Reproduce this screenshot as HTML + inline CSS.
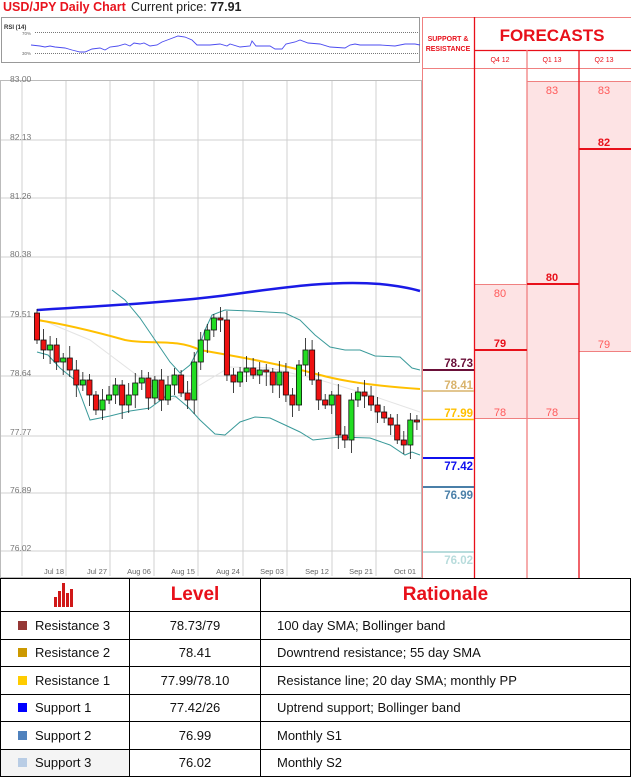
<!DOCTYPE html>
<html><head><meta charset="utf-8"><style>
body{margin:0;width:631px;height:777px;background:#fff;font-family:"Liberation Sans",sans-serif;overflow:hidden;position:relative}
.abs{position:absolute}
table{border-collapse:collapse;position:absolute;left:0;top:578px;width:631px}
td{border:1px solid #000;font-size:13px;color:#111;padding:0;height:26.5px}
</style></head><body>
<div class="abs" style="left:3px;top:0;font-size:12.5px;font-weight:bold;color:#e8141e">USD/JPY Daily Chart</div>
<div class="abs" style="left:131px;top:0;font-size:12.5px;color:#222">Current price: <b>77.91</b></div>

<svg class="abs" style="left:0;top:0" width="631" height="578">
<!-- RSI -->
<rect x="1.5" y="17.5" width="418" height="45" fill="#fff" stroke="#999"/>
<text x="4" y="29" font-size="6" font-weight="bold" fill="#333">RSI (14)</text>
<text x="22" y="35" font-size="4.5" fill="#666">70%</text>
<text x="22" y="55" font-size="4.5" fill="#666">30%</text>
<line x1="35" y1="32.5" x2="418" y2="32.5" stroke="#777" stroke-dasharray="1,1"/>
<line x1="35" y1="53.5" x2="418" y2="53.5" stroke="#777" stroke-dasharray="1,1"/>
<polyline fill="none" stroke="#4b4bf0" stroke-width="0.9" points="31,45 40,46 45,47 50,46 55,47 65,48 72,50 80,52 85,52 92,49 100,48 105,50 110,47 118,46 125,44 130,46 134,43 140,44 144,43 150,46 157,45 162,42 170,39 178,36 185,37 192,40 197,45 210,45 220,44 227,46 230,44 240,47 250,46 252,41 256,46 270,46 275,49 282,49 286,44 295,42 300,40 308,43 320,44 330,47 345,48 350,45 355,44 360,45 380,45"/>
<polyline fill="none" stroke="#4b4bf0" stroke-width="0.9" points="380,45 395,46 405,44 415,44 420,45"/>
<!-- chart frame -->
<rect x="0.5" y="80.5" width="421" height="497" fill="#fff" stroke="#bbb"/>
<g stroke="#d0d0d0" stroke-width="1">
<line x1="22" y1="81" x2="22" y2="576"/><line x1="66" y1="81" x2="66" y2="576"/><line x1="110" y1="81" x2="110" y2="576"/><line x1="154" y1="81" x2="154" y2="576"/><line x1="198" y1="81" x2="198" y2="576"/><line x1="243" y1="81" x2="243" y2="576"/><line x1="287" y1="81" x2="287" y2="576"/><line x1="332" y1="81" x2="332" y2="576"/><line x1="376" y1="81" x2="376" y2="576"/>
<line x1="1" y1="140" x2="421" y2="140"/><line x1="1" y1="198" x2="421" y2="198"/><line x1="1" y1="257" x2="421" y2="257"/><line x1="1" y1="317" x2="421" y2="317"/><line x1="1" y1="376" x2="421" y2="376"/><line x1="1" y1="436" x2="421" y2="436"/><line x1="1" y1="493" x2="421" y2="493"/><line x1="1" y1="551" x2="421" y2="551"/>
</g>
<g font-size="8.5" fill="#777">
<text x="10" y="82">83.00</text><text x="10" y="140">82.13</text><text x="10" y="199">81.26</text><text x="10" y="257">80.38</text><text x="10" y="317">79.51</text><text x="10" y="376">78.64</text><text x="10" y="435">77.77</text><text x="10" y="493">76.89</text><text x="10" y="551">76.02</text>
</g>
<g font-size="7.5" fill="#666" text-anchor="middle">
<text x="54" y="574">Jul 18</text><text x="97" y="574">Jul 27</text><text x="139" y="574">Aug 06</text><text x="183" y="574">Aug 15</text><text x="228" y="574">Aug 24</text><text x="272" y="574">Sep 03</text><text x="317" y="574">Sep 12</text><text x="361" y="574">Sep 21</text><text x="405" y="574">Oct 01</text>
</g>
<polyline fill="none" stroke="#e4e4e4" stroke-width="1" points="37,318 90,340 130,370 170,400 200,385 230,367 270,368 320,380 370,395 420,412"/>
<path d="M37,310 C120,305 170,302 220,296 C280,288 330,280 380,284 C400,286 410,288 420,291" fill="none" stroke="#1a1ae6" stroke-width="2.5"/>
<path d="M37,320 C70,325 100,333 125,340 C150,345 175,338 200,350 C240,357 280,364 320,375 C350,383 380,386 420,389" fill="none" stroke="#ffc000" stroke-width="2"/>
<polyline fill="none" stroke="#3a9a9a" stroke-width="1" points="37,352 48,355 60,368 75,380 90,420 110,416 130,411 150,408 165,397 175,396 188,407 200,420 215,434 225,435 240,422 255,417 270,418 285,425 300,432 313,440 340,437 370,438 390,445 405,455 412,452 420,455"/>
<polyline fill="none" stroke="#3a9a9a" stroke-width="1" points="112,290 125,300 140,318 155,340 170,362 180,373 190,365 198,350 205,330 212,315 225,310 250,311 285,313 300,320 315,335 330,347 345,350 360,350 375,356 400,357 412,368 420,370"/>
<g id="c" stroke="#111" stroke-width="0.8"></g>
<rect x="527" y="81" width="52" height="337" fill="#fde3e4"/>
<rect x="474" y="284" width="53" height="134" fill="#fde3e4"/>
<rect x="579" y="81" width="52" height="270" fill="#fde3e4"/>
<g stroke="#f08080" stroke-width="1" fill="none">
<line x1="422.5" y1="17" x2="422.5" y2="578"/>
<line x1="422" y1="17.5" x2="631" y2="17.5"/>
<line x1="422" y1="68.5" x2="631" y2="68.5"/>
<line x1="527" y1="81.5" x2="631" y2="81.5"/>
<line x1="474" y1="284.5" x2="527" y2="284.5"/>
<line x1="474" y1="418.5" x2="579" y2="418.5"/>
<line x1="579" y1="351.5" x2="631" y2="351.5"/>
</g>
<g stroke="#e8101a" stroke-width="1.3">
<line x1="474.5" y1="17" x2="474.5" y2="578"/>
<line x1="474" y1="50.5" x2="631" y2="50.5"/>
<line x1="527" y1="50" x2="527" y2="578" stroke="#f08080"/>
<line x1="579" y1="50" x2="579" y2="578"/>
</g>
<g stroke="#e8101a" stroke-width="2">
<line x1="474" y1="350" x2="527" y2="350"/>
<line x1="527" y1="284" x2="579" y2="284"/>
<line x1="579" y1="149" x2="631" y2="149"/>
</g>
<text x="448" y="41" font-size="7" font-weight="bold" fill="#e8101a" text-anchor="middle">SUPPORT &amp;</text>
<text x="448" y="51" font-size="7" font-weight="bold" fill="#e8101a" text-anchor="middle">RESISTANCE</text>
<text x="552" y="41" font-size="17" font-weight="bold" fill="#e8101a" text-anchor="middle">FORECASTS</text>
<g font-size="7" fill="#e8101a" text-anchor="middle">
<text x="500" y="62">Q4 12</text><text x="552" y="62">Q1 13</text><text x="604" y="62">Q2 13</text>
</g>
<g font-size="11" fill="#ff5a5a" text-anchor="middle">
<text x="552" y="94">83</text><text x="604" y="94">83</text>
<text x="500" y="297">80</text><text x="604" y="348">79</text>
<text x="500" y="416">78</text><text x="552" y="416">78</text>
</g>
<g font-size="11" font-weight="bold" fill="#e8101a" text-anchor="middle">
<text x="604" y="146">82</text><text x="552" y="281">80</text><text x="500" y="347">79</text>
</g>
<line x1="423" y1="370" x2="474" y2="370" stroke="#6a0f38" stroke-width="2"/>
<line x1="423" y1="391" x2="474" y2="391" stroke="#d9b36c" stroke-width="1.5"/>
<line x1="423" y1="419.5" x2="474" y2="419.5" stroke="#ffc000" stroke-width="1.5"/>
<line x1="423" y1="458" x2="474" y2="458" stroke="#1010ee" stroke-width="2"/>
<line x1="423" y1="487" x2="474" y2="487" stroke="#4a7fa8" stroke-width="2"/>
<line x1="423" y1="552" x2="474" y2="552" stroke="#b8dcdc" stroke-width="2"/>
<g font-size="11.5" font-weight="bold" text-anchor="end">
<text x="473" y="367" fill="#6a0f38">78.73</text>
<text x="473" y="389" fill="#d9b36c">78.41</text>
<text x="473" y="417" fill="#ffc000">77.99</text>
<text x="473" y="470" fill="#1010ee">77.42</text>
<text x="473" y="499" fill="#4a7fa8">76.99</text>
<text x="473" y="564" fill="#b8dcdc">76.02</text>
</g>
</svg>
<script>
(function(){
var c=[340,350,345,362,358,370,385,380,395,410,400,395,385,405,395,383,378,398,380,400,385,375,393,400,362,340,330,318,320,375,382,372,368,375,370,372,385,372,395,405,365,350,380,400,405,395,435,440,400,392,396,405,412,418,425,440,445,420,422];
var g=document.getElementById('c'),o=313,s='';
for(var i=0;i<c.length;i++){var x=37+i*6.55,cl=c[i],t=Math.min(o,cl),b=Math.max(o,cl),h=Math.max(b-t,2);
var hi=t-4-(i*7%9),lo=b+4+(i*5%11);
s+='<line x1="'+x+'" y1="'+hi+'" x2="'+x+'" y2="'+lo+'"/>';
s+='<rect x="'+(x-2.6)+'" y="'+t+'" width="5.2" height="'+h+'" fill="'+(cl<o?'#22dd22':'#ee1111')+'"/>';o=cl;}
g.innerHTML=s;})();
</script>

<table>
<tr style="height:33px"><td style="width:128px;text-align:center"><svg width="26" height="26" viewBox="0 0 26 26"><g fill="#d01818"><rect x="2" y="16" width="3" height="10"/><rect x="6" y="10" width="3" height="16"/><rect x="10" y="2" width="3" height="24"/><rect x="14" y="12" width="3" height="14"/><rect x="18" y="8" width="3" height="18"/></g></svg></td>
<td style="width:130px;text-align:center;font-size:19px;font-weight:bold;color:#e8101a">Level</td>
<td style="text-align:center;font-size:19px;font-weight:bold;color:#e8101a">Rationale</td></tr>
<tr><td style="padding-left:17px"><span style="display:inline-block;width:9px;height:9px;background:#953735;margin-right:8px"></span>Resistance 3</td><td style="text-align:center">78.73/79</td><td style="padding-left:16px">100 day SMA; Bollinger band</td></tr>
<tr><td style="padding-left:17px"><span style="display:inline-block;width:9px;height:9px;background:#cc9900;margin-right:8px"></span>Resistance 2</td><td style="text-align:center">78.41</td><td style="padding-left:16px">Downtrend resistance; 55 day SMA</td></tr>
<tr><td style="padding-left:17px"><span style="display:inline-block;width:9px;height:9px;background:#ffcc00;margin-right:8px"></span>Resistance 1</td><td style="text-align:center">77.99/78.10</td><td style="padding-left:16px">Resistance line; 20 day SMA; monthly PP</td></tr>
<tr><td style="padding-left:17px"><span style="display:inline-block;width:9px;height:9px;background:#0000ff;margin-right:8px"></span>Support 1</td><td style="text-align:center">77.42/26</td><td style="padding-left:16px">Uptrend support; Bollinger band</td></tr>
<tr><td style="padding-left:17px"><span style="display:inline-block;width:9px;height:9px;background:#4f81bd;margin-right:8px"></span>Support 2</td><td style="text-align:center">76.99</td><td style="padding-left:16px">Monthly S1</td></tr>
<tr><td style="padding-left:17px;background:#f4f4f4"><span style="display:inline-block;width:9px;height:9px;background:#b9cde5;margin-right:8px"></span>Support 3</td><td style="text-align:center">76.02</td><td style="padding-left:16px">Monthly S2</td></tr>
</table>
</body></html>
